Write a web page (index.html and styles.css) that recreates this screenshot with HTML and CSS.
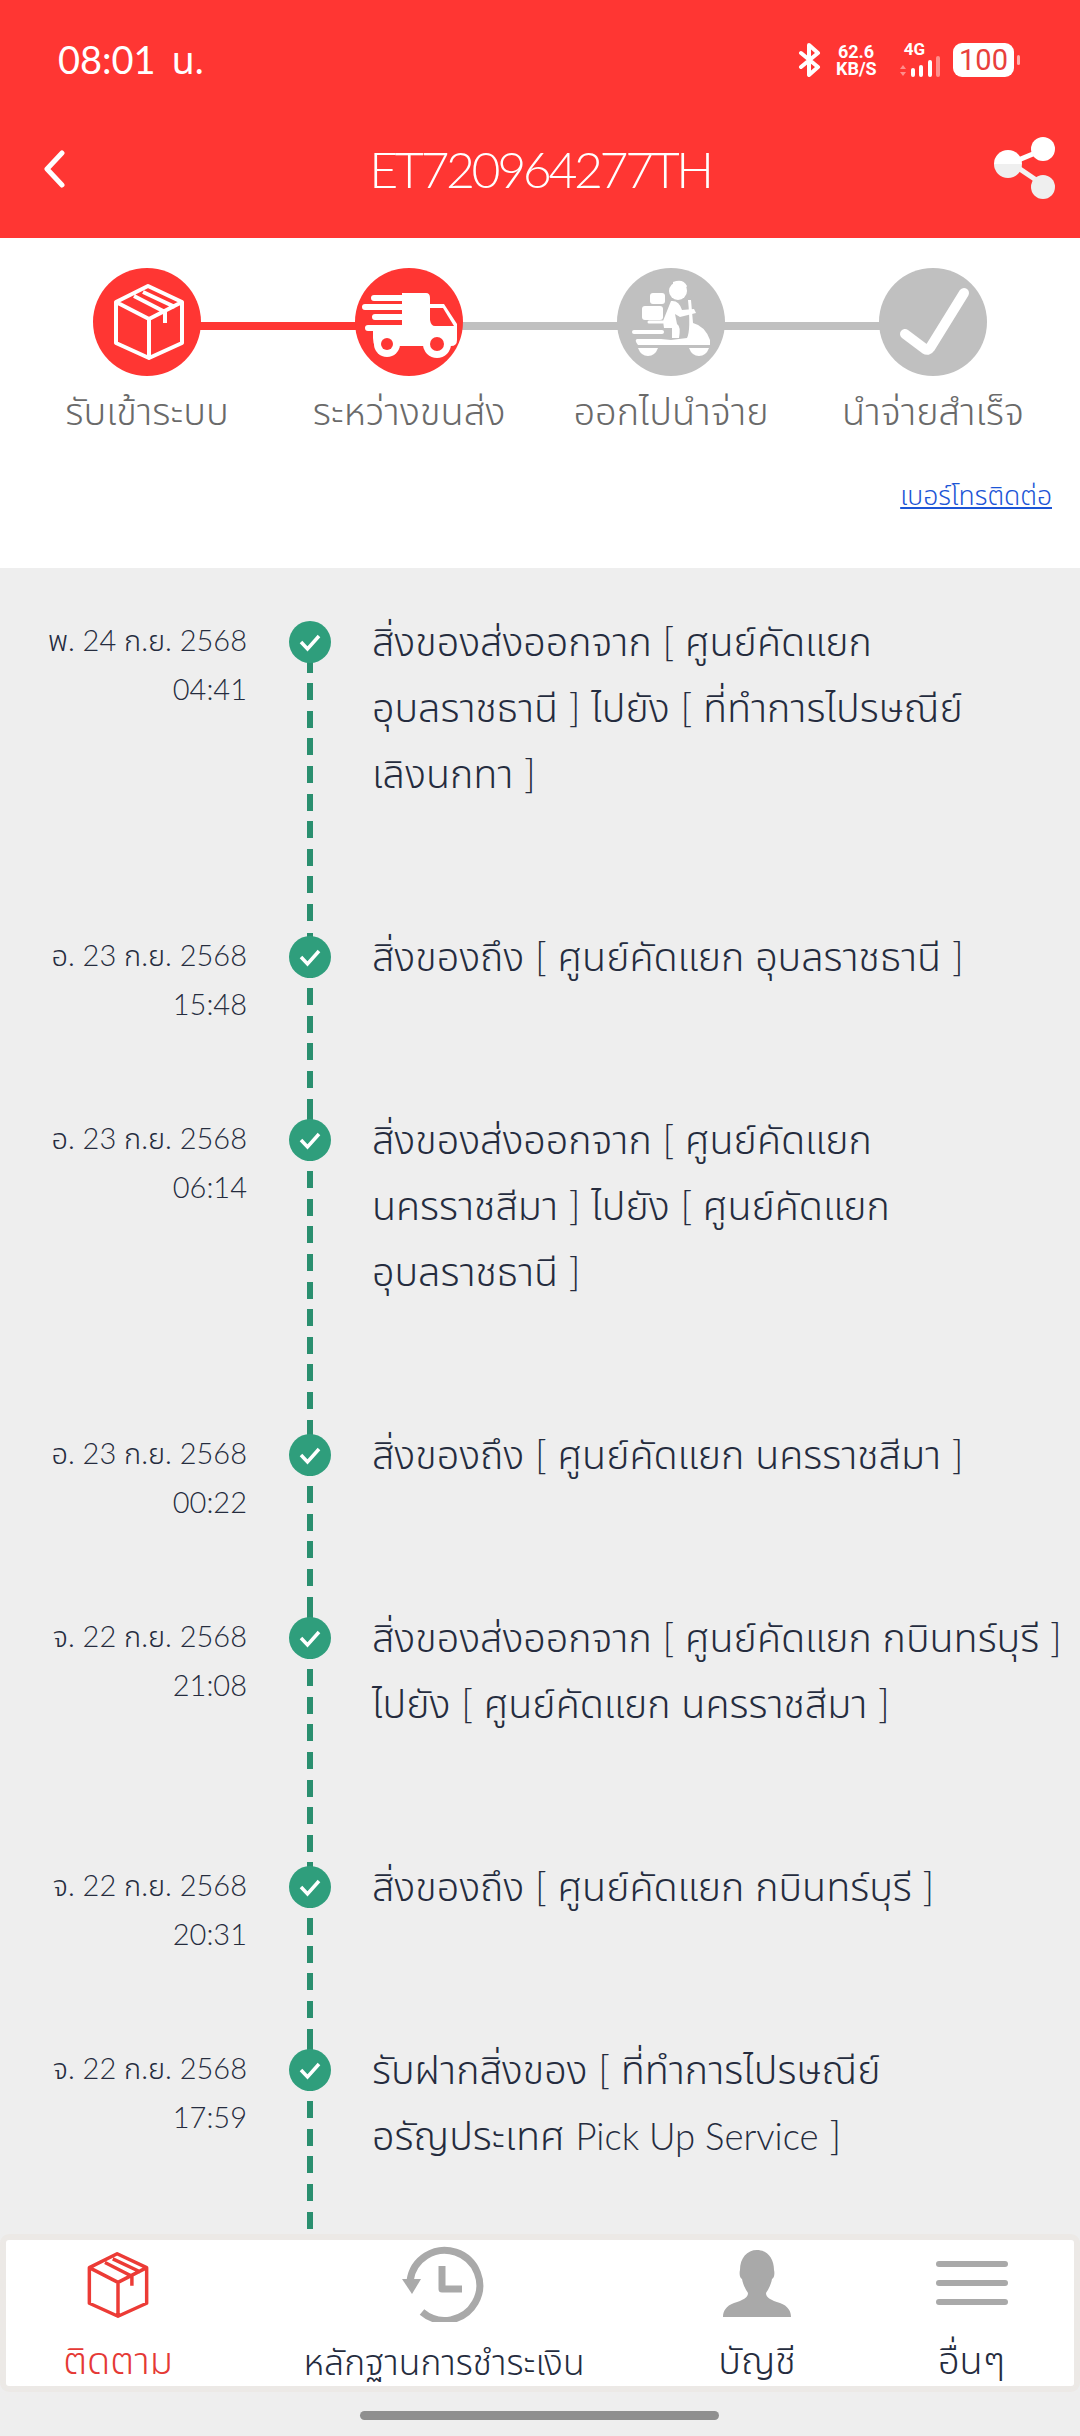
FILE: index.html
```html
<!DOCTYPE html>
<html lang="th">
<head>
<meta charset="utf-8">
<title>ET720964277TH</title>
<link rel="stylesheet" href="styles.css">
</head>
<body>
<div class="app">
  <header class="head">
    <div class="status">
      <span class="clock">08:01 น.</span>
      <div class="sys">
        <svg class="bt" viewBox="0 0 24 34"><path d="M3 10 L20 24 L11 32 L11 2 L20 10 L3 24" fill="none" stroke="#fff" stroke-width="4" stroke-linejoin="round" stroke-linecap="round"/></svg>
        <div class="speed"><span>62.6</span><span>KB/S</span></div>
        <div class="net">
          <span class="g">4G</span>
          <svg class="bars" viewBox="0 0 44 22"><path d="M3 13 L6 9 L9 13Z M3 16 L6 20 L9 16Z" fill="#ff8f8c"/><g fill="#fff"><rect x="14" y="12" width="4" height="9" rx="2"/><rect x="22" y="9" width="4" height="12" rx="2"/><rect x="31" y="4" width="4" height="17" rx="2"/></g><rect x="39" y="0" width="4" height="21" rx="2" fill="#ff8f8c"/></svg>
        </div>
        <span class="batt">100</span><span class="nub"></span>
      </div>
    </div>
    <div class="bar">
      <svg class="back" viewBox="0 0 24 38"><path d="M20 3 L5 19 L20 35" fill="none" stroke="#fff" stroke-width="5" stroke-linecap="round" stroke-linejoin="round"/></svg>
      <h1 class="title">ET720964277TH</h1>
      <svg class="share" viewBox="0 0 64 62"><path d="M19 26 L53 12" stroke="#fff" stroke-width="5"/><path d="M19 26 L53 49" stroke="#f3f3f3" stroke-width="5"/><path d="M2 27 A14 14 0 0 1 30 27Z" fill="#fff"/><path d="M2 27 A14 14 0 0 0 30 27Z" fill="#efefef"/><circle cx="51" cy="12" r="12" fill="#fff"/><circle cx="51" cy="50" r="12" fill="#efefef"/></svg>
    </div>
  </header>

  <section class="track">
    <div class="steps">
      <div class="step">
        <div class="dot on">
          <svg viewBox="0 0 108 108"><path d="M55 18 L89 34 V75 L56 90 L23 75 V34 Z M23 34 L56 51 L89 34 M56 51 V90 M41 28 L72 44 V55 M50 24 L82 39" fill="none" stroke="#fff" stroke-width="4" stroke-linejoin="round"/></svg>
        </div>
        <span class="lbl">รับเข้าระบบ</span>
      </div>
      <div class="step">
        <div class="dot on">
          <svg viewBox="0 0 108 108"><g fill="#fff"><path d="M47 25 H71 Q75 25 75 30 V36 H89 L102 56 V72 Q102 78 96 78 H40 V83 H26 Q18 80 18 70 V61 H47Z"/></g><path d="M19 30 H48 M10 39 H48 M20 49 H48 M13 60 H48" stroke="#fff" stroke-width="6" stroke-linecap="round" fill="none"/><path d="M75 40 H88 L99 58 H80 Q76 58 75 52Z" fill="#ff3633"/><circle cx="32" cy="76" r="13" fill="#fff"/><circle cx="32" cy="76" r="6" fill="#ff3633"/><circle cx="82" cy="76" r="14" fill="#fff"/><circle cx="82" cy="76" r="7" fill="#ff3633"/></svg>
        </div>
        <span class="lbl">ระหว่างขนส่ง</span>
      </div>
      <div class="step">
        <div class="dot off">
          <svg viewBox="0 0 108 108"><g fill="#fff"><circle cx="61" cy="23" r="9"/><path d="M56 14 Q66 10 70 18 L68 22 L56 20Z"/><rect x="33" y="25" width="15" height="11" rx="3"/><rect x="25" y="38" width="21" height="14" rx="3"/><path d="M54 33 Q62 32 65 42 L77 41 L79 45 L63 49 L58 46 L60 56 Q64 58 62 70 L55 70 L55 60 L47 60 L46 53Z"/><path d="M71 32 L74 32 L76 55 Q88 58 93 72 L93 77 L21 77 Q17 72 20 71 L44 71 L54 72 L70 70 Q74 62 71 32Z"/><path d="M21 80 H41 Q38 88 31 88 Q24 88 21 80Z M72 80 H92 Q89 88 82 88 Q75 88 72 80Z"/></g><path d="M17 64 H45" stroke="#fff" stroke-width="4" stroke-linecap="round"/><path d="M32 54 H46" stroke="#fff" stroke-width="3" stroke-linecap="round"/></svg>
        </div>
        <span class="lbl">ออกไปนำจ่าย</span>
      </div>
      <div class="step">
        <div class="dot off">
          <svg viewBox="0 0 108 108"><path d="M85 25 L51 80 Q49 83 46 81 L26 66" fill="none" stroke="#fff" stroke-width="10" stroke-linecap="round" stroke-linejoin="round"/></svg>
        </div>
        <span class="lbl">นำจ่ายสำเร็จ</span>
      </div>
    </div>
    <div class="contact"><a class="phone">เบอร์โทรติดต่อ</a></div>
  </section>

  <main class="timeline">
    <article class="ev">
      <div class="when"><span>พ. 24 ก.ย. 2568</span><span>04:41</span></div>
      <div class="mark"><svg viewBox="0 0 42 42"><circle cx="21" cy="21" r="21" fill="#2f9e7c"/><path d="M12 21 L18.5 28 L30 15" fill="none" stroke="#fff" stroke-width="3.5"/></svg></div>
      <p class="what">สิ่งของส่งออกจาก [ ศูนย์คัดแยก<br>อุบลราชธานี ] ไปยัง [ ที่ทำการไปรษณีย์<br>เลิงนกทา ]</p>
    </article>
    <article class="ev">
      <div class="when"><span>อ. 23 ก.ย. 2568</span><span>15:48</span></div>
      <div class="mark"><svg viewBox="0 0 42 42"><circle cx="21" cy="21" r="21" fill="#2f9e7c"/><path d="M12 21 L18.5 28 L30 15" fill="none" stroke="#fff" stroke-width="3.5"/></svg></div>
      <p class="what">สิ่งของถึง [ ศูนย์คัดแยก อุบลราชธานี ]</p>
    </article>
    <article class="ev">
      <div class="when"><span>อ. 23 ก.ย. 2568</span><span>06:14</span></div>
      <div class="mark"><svg viewBox="0 0 42 42"><circle cx="21" cy="21" r="21" fill="#2f9e7c"/><path d="M12 21 L18.5 28 L30 15" fill="none" stroke="#fff" stroke-width="3.5"/></svg></div>
      <p class="what">สิ่งของส่งออกจาก [ ศูนย์คัดแยก<br>นครราชสีมา ] ไปยัง [ ศูนย์คัดแยก<br>อุบลราชธานี ]</p>
    </article>
    <article class="ev">
      <div class="when"><span>อ. 23 ก.ย. 2568</span><span>00:22</span></div>
      <div class="mark"><svg viewBox="0 0 42 42"><circle cx="21" cy="21" r="21" fill="#2f9e7c"/><path d="M12 21 L18.5 28 L30 15" fill="none" stroke="#fff" stroke-width="3.5"/></svg></div>
      <p class="what">สิ่งของถึง [ ศูนย์คัดแยก นครราชสีมา ]</p>
    </article>
    <article class="ev">
      <div class="when"><span>จ. 22 ก.ย. 2568</span><span>21:08</span></div>
      <div class="mark"><svg viewBox="0 0 42 42"><circle cx="21" cy="21" r="21" fill="#2f9e7c"/><path d="M12 21 L18.5 28 L30 15" fill="none" stroke="#fff" stroke-width="3.5"/></svg></div>
      <p class="what">สิ่งของส่งออกจาก [ ศูนย์คัดแยก กบินทร์บุรี ]<br>ไปยัง [ ศูนย์คัดแยก นครราชสีมา ]</p>
    </article>
    <article class="ev">
      <div class="when"><span>จ. 22 ก.ย. 2568</span><span>20:31</span></div>
      <div class="mark"><svg viewBox="0 0 42 42"><circle cx="21" cy="21" r="21" fill="#2f9e7c"/><path d="M12 21 L18.5 28 L30 15" fill="none" stroke="#fff" stroke-width="3.5"/></svg></div>
      <p class="what">สิ่งของถึง [ ศูนย์คัดแยก กบินทร์บุรี ]</p>
    </article>
    <article class="ev">
      <div class="when"><span>จ. 22 ก.ย. 2568</span><span>17:59</span></div>
      <div class="mark"><svg viewBox="0 0 42 42"><circle cx="21" cy="21" r="21" fill="#2f9e7c"/><path d="M12 21 L18.5 28 L30 15" fill="none" stroke="#fff" stroke-width="3.5"/></svg></div>
      <p class="what">รับฝากสิ่งของ [ ที่ทำการไปรษณีย์<br>อรัญประเทศ <span class="lat">Pick Up Service</span> ]</p>
    </article>
  </main>

  <nav class="tabs">
    <div class="tab t1">
      <svg class="ic" width="64" height="66" viewBox="20 16 72 76"><path d="M55 18 L89 34 V75 L56 90 L23 75 V34 Z M23 34 L56 51 L89 34 M56 51 V90 M41 28 L72 44 V55 M50 24 L82 39" fill="none" stroke="#ec3b36" stroke-width="4" stroke-linejoin="round"/></svg>
      <span class="tl red">ติดตาม</span>
    </div>
    <div class="tab t2">
      <svg class="ic" width="84" height="76" viewBox="0 0 84 76"><path d="M8 35 A35 35 0 1 1 20 66" fill="none" stroke="#a9a9a9" stroke-width="7"/><path d="M0 33 H19 L10 48Z" fill="#a9a9a9"/><path d="M40 20 V43 H60" fill="none" stroke="#a9a9a9" stroke-width="7" stroke-linejoin="round"/></svg>
      <span class="tl">หลักฐานการชำระเงิน</span>
    </div>
    <div class="tab t3">
      <svg class="ic" width="70" height="68" viewBox="0 0 70 68"><path d="M35 0 C45 0 52 8 52 20 C53 24 52 28 50 29 C49 35 46 40 44 43 C44 48 49 50 58 53 C66 56 69 61 69 67 H1 C1 61 4 56 12 53 C21 50 26 48 26 43 C24 40 21 35 20 29 C18 28 17 24 18 20 C18 8 25 0 35 0Z" fill="#a9a9a9"/></svg>
      <span class="tl">บัญชี</span>
    </div>
    <div class="tab t4">
      <div class="burger"><i></i><i></i><i></i></div>
      <span class="tl">อื่นๆ</span>
    </div>
  </nav>
  <div class="homebar"></div>
</div>
</body>
</html>
```

FILE: styles.css
```css
* { box-sizing: border-box; }
html, body { margin: 0; padding: 0; }
body {
  width: 1080px;
  height: 2436px;
  overflow: hidden;
  background: #eeeeee;
  font-family: "Lato", "Noto Sans", "Noto Sans Thai", "DejaVu Sans", sans-serif;
  font-weight: 300;
}
.app { position: relative; width: 1080px; height: 2436px; overflow: hidden; }

.head { height: 238px; background: #ff3633; color: #fff; padding-top: 40px; }
.status { height: 44px; display: flex; justify-content: space-between; align-items: center; padding: 0 60px 0 58px; }
.clock { font-size: 38px; font-weight: 400; word-spacing: 6px; }
.sys { display: flex; align-items: center; margin-top: -5px; }
.bt { width: 24px; height: 34px; margin-right: 14px; }
.speed { display: flex; flex-direction: column; font-size: 18px; line-height: 17px; font-weight: 700; text-align: center; width: 40px; margin-right: 21px; font-family: "Roboto", sans-serif; }
.net { width: 44px; display: flex; flex-direction: column; align-items: flex-end; margin-right: 12px; }
.g { font-size: 17px; line-height: 14px; font-weight: 700; margin-right: 16px; font-family: "Roboto", sans-serif; }
.bars { width: 44px; height: 22px; }
.batt { width: 61px; height: 34px; background: #fff; color: #e8403c; border-radius: 9px; font: 400 29px/34px "Roboto", sans-serif; text-align: center; }
.nub { width: 3px; height: 10px; background: #ffb0ae; margin-left: 3px; border-radius: 2px; }

.bar { height: 90px; margin-top: 40px; display: grid; grid-template-columns: 1fr auto 1fr; align-items: center; padding: 0 24px; }
.back { width: 24px; height: 38px; justify-self: start; margin-left: 18px; }
.title { margin: 0; font-size: 50px; font-weight: 300; letter-spacing: -3.4px; }
.share { width: 64px; height: 62px; justify-self: end; margin-top: -2px; }

.track { height: 330px; background: #fff; padding: 30px 16px 0; }
.steps { display: flex; }
.step { flex: 1; display: flex; flex-direction: column; align-items: center; position: relative; }
.step::after { content: ""; position: absolute; left: 50%; width: 100%; top: 54px; height: 8px; background: #c0c0c0; }
.step:first-child::after { background: #ff3633; }
.step:last-child::after { display: none; }
.dot { width: 108px; height: 108px; border-radius: 50%; position: relative; z-index: 1; }
.dot svg { display: block; width: 108px; height: 108px; }
.on { background: #ff3633; }
.off { background: #c0c0c0; }
.lbl { font-size: 38px; line-height: 50px; margin-top: 9px; color: #6a6a6a; white-space: nowrap; }
.contact { text-align: right; margin-top: 43px; padding-right: 12px; }
.phone { font-size: 26.5px; line-height: 34px; color: #1c55d6; text-decoration: underline; }

.timeline { height: 1670px; overflow: hidden; padding-top: 53px; }
.ev { display: flex; align-items: flex-start; position: relative; }
.ev::before { content: ""; position: absolute; left: 307px; top: -3px; height: 100%; width: 6px;
  background: repeating-linear-gradient(to bottom, #2a8f6f 0 17px, transparent 17px 27.6px); }
.ev:first-child::before { top: 7px; height: calc(100% - 14px); }
.when { width: 247px; display: flex; flex-direction: column; align-items: flex-end; font-size: 29px; line-height: 49px; color: #252c3e; flex: none; margin-top: -6px; }
.mark { width: 42px; height: 42px; margin-left: 42px; flex: none; position: relative; z-index: 1; }
.mark svg { display: block; width: 42px; height: 42px; }
.what { margin: -13px 0 0 41px; padding-bottom: 130px; font-size: 39.5px; line-height: 66px; color: #252c3e; white-space: nowrap; }
.lat { font-size: 36.5px; }

.tabs { position: absolute; left: 0; right: 0; top: 2234px; height: 158px; background: #fff; border: 6px solid #ece9e6; border-radius: 9px;
  display: flex; gap: 134px; padding-left: 60px; z-index: 2; }
.tab { display: flex; flex-direction: column; align-items: center; height: 146px; position: relative; flex: none; }
.t1 { width: 104px; } .t2 { width: 280px; } .t3 { width: 78px; } .t4 { width: 67px; margin-left: 8px; }
.ic { flex: none; margin-top: 6px; }
.t1 .ic { margin-top: 12px; }
.t3 .ic { margin-top: 10px; }
.tl { position: absolute; bottom: 2px; left: -20px; right: -20px; text-align: center; font-size: 35.5px; line-height: 44px; color: #252c3e; white-space: nowrap; }
.t1 .tl, .t3 .tl, .t4 .tl { font-size: 38px; bottom: 5px; }
.red, .t1 .tl { color: #e53935; }
.burger { margin-top: 21px; display: flex; flex-direction: column; gap: 13px; }
.burger i { display: block; width: 72px; height: 6px; border-radius: 3px; background: #a9a9a9; }
.homebar { position: absolute; left: 360px; top: 2411px; width: 359px; height: 9px; border-radius: 5px; background: #8f8f8f; }
```
